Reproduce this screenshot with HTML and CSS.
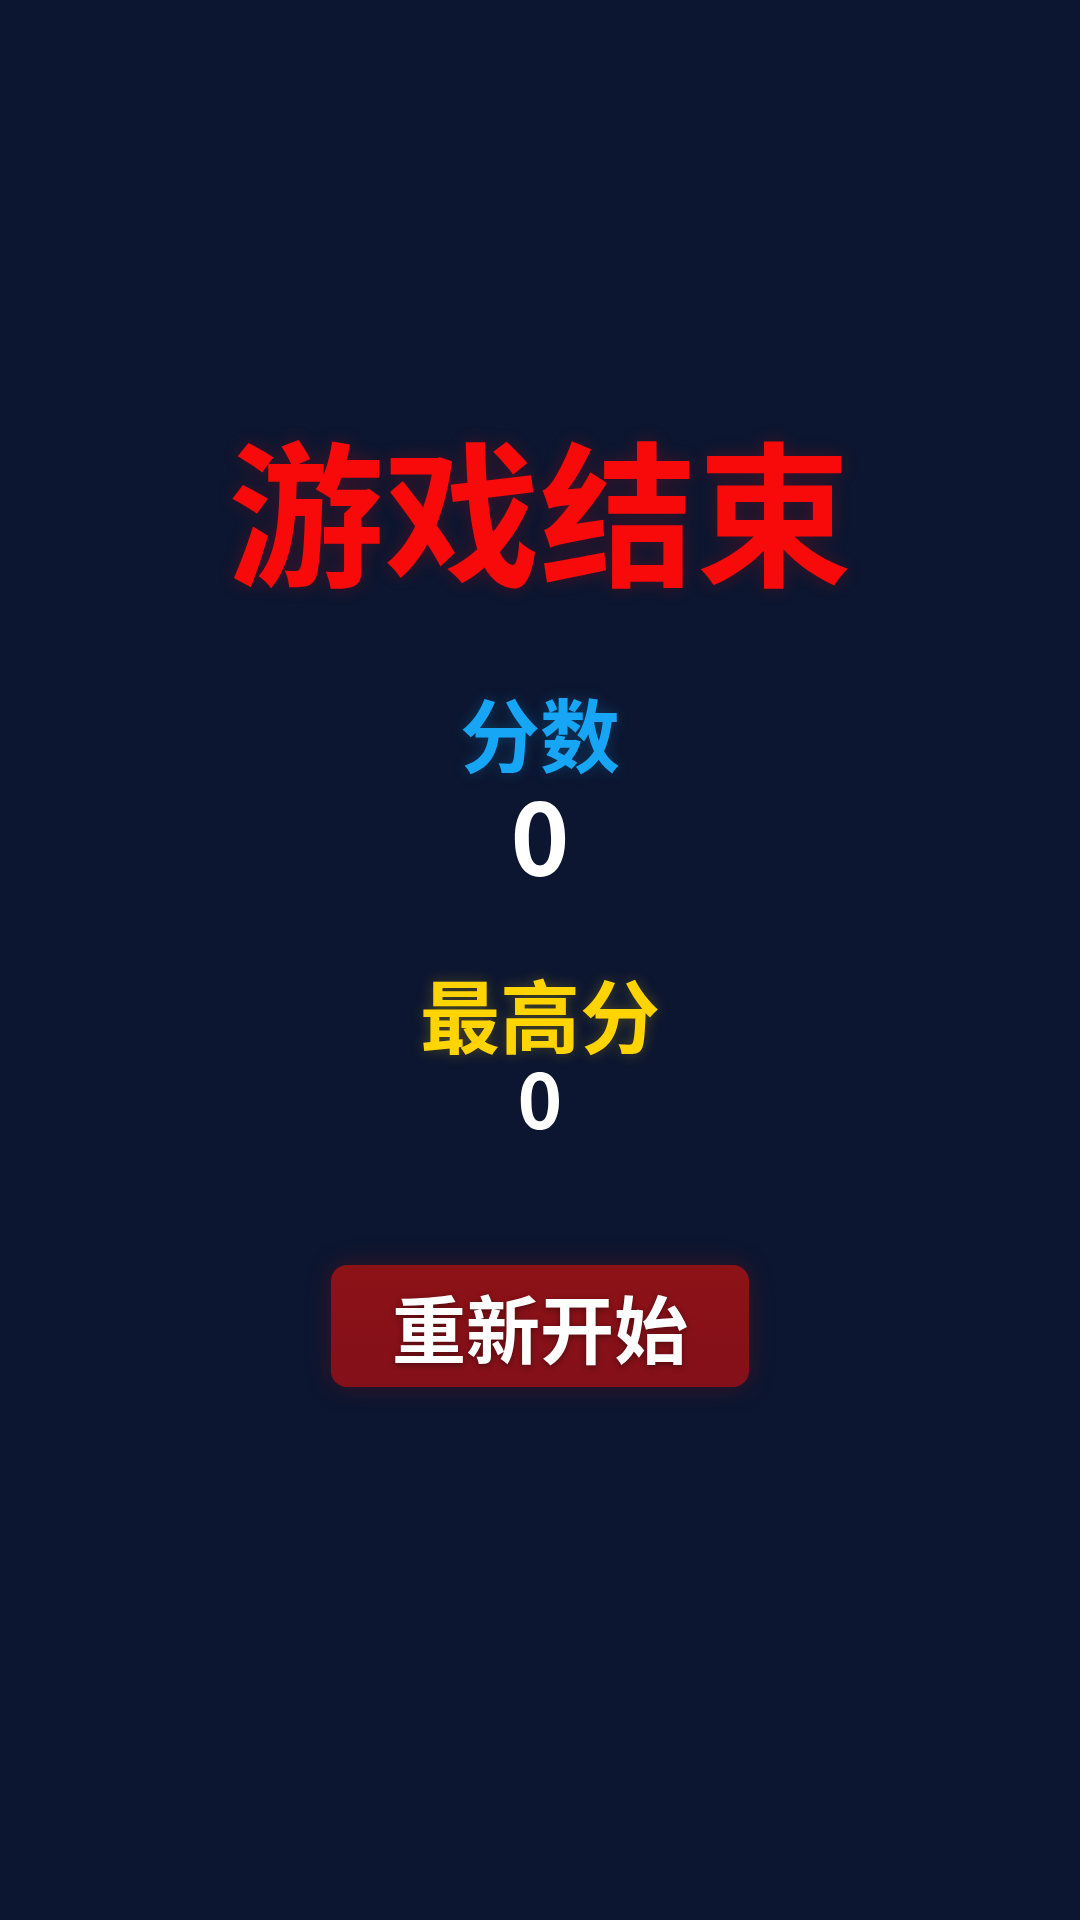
FILE: index.html
```html
<!DOCTYPE html>
<html lang="zh-CN">
<head>
<meta charset="utf-8">
<title>游戏结束</title>
<link rel="stylesheet" href="styles.css">
</head>
<body>
<main class="screen">
  <h1 class="title">游戏结束</h1>
  <section class="stat">
    <div class="stat-label score-label">分数</div>
    <div class="stat-value score-value">0</div>
  </section>
  <section class="stat best">
    <div class="stat-label best-label">最高分</div>
    <div class="stat-value best-value">0</div>
  </section>
  <button class="restart" type="button">重新开始</button>
</main>
</body>
</html>
```
FILE: styles.css
```css
html, body {
  margin: 0;
  padding: 0;
  width: 1080px;
  height: 1920px;
  background: #0c1630;
  overflow: hidden;
}
.screen {
  box-sizing: border-box;
  width: 1080px;
  height: 1920px;
  display: flex;
  flex-direction: column;
  align-items: center;
  padding-top: 428px;
  font-family: "Noto Sans CJK SC", "Noto Sans", sans-serif;
}
.title {
  margin: 0;
  font-size: 156px;
  line-height: 1;
  font-weight: 700;
  color: #f80a0a;
  text-shadow: 0 0 18px rgba(255, 0, 0, 0.22);
  letter-spacing: 0;
}
.stat {
  display: flex;
  flex-direction: column;
  align-items: center;
  margin-top: 107px;
}
.stat.best {
  margin-top: 89px;
}
.stat-label {
  font-size: 80px;
  line-height: 1;
  font-weight: 700;
}
.score-label {
  color: #16a6f5;
  text-shadow: 0 0 14px rgba(22, 166, 245, 0.25);
}
.best-label {
  color: #ffd400;
  text-shadow: 0 0 14px rgba(255, 212, 0, 0.25);
}
.stat-value {
  color: #ffffff;
  line-height: 1;
  font-weight: 700;
}
.score-value {
  font-size: 100px;
  margin-top: 12px;
}
.best-value {
  font-size: 76px;
  margin-top: 6px;
}
.restart {
  margin-top: 131px;
  width: 418px;
  height: 122px;
  border: none;
  border-radius: 16px;
  background: linear-gradient(180deg, #8c1216, #84101a);
  color: #ffffff;
  font-family: "Noto Sans CJK SC", "Noto Sans", sans-serif;
  font-size: 74px;
  font-weight: 700;
  line-height: 1;
  padding: 0;
  box-shadow: 0 0 24px rgba(138, 16, 21, 0.35);
  text-shadow: 0 2px 6px rgba(0, 0, 0, 0.4);
}
```
